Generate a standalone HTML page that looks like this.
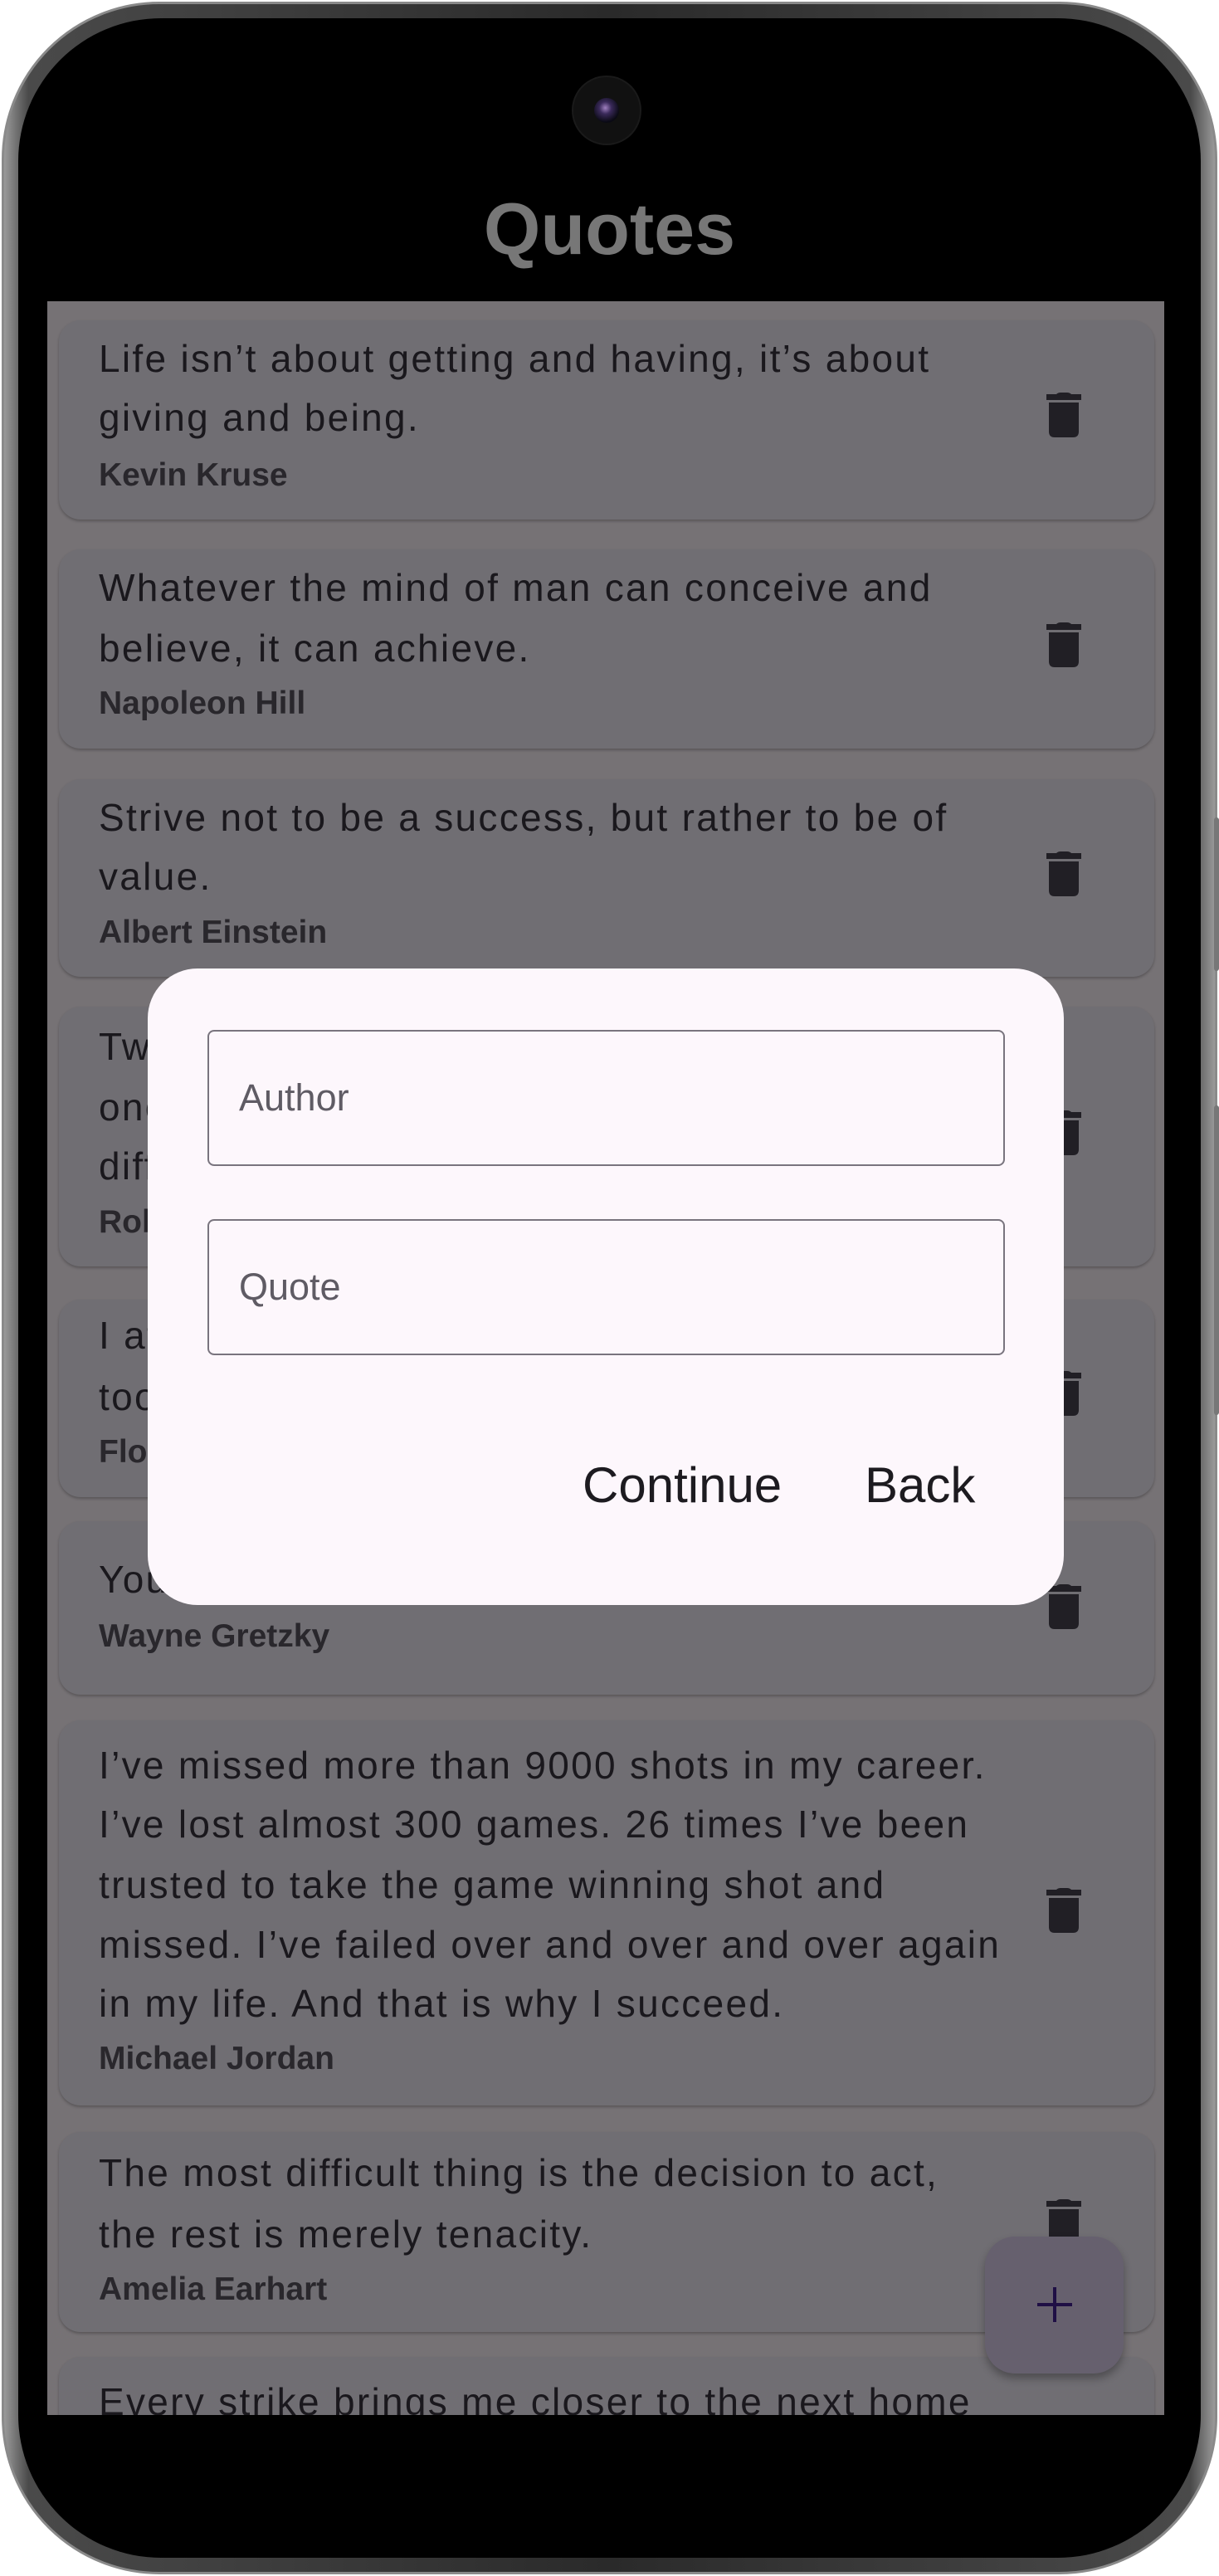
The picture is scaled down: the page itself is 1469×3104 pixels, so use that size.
<!DOCTYPE html>
<html><head><meta charset="utf-8"><style>
*{margin:0;padding:0;box-sizing:border-box}
body{width:1469px;height:3104px;background:#fff;position:relative;overflow:hidden;font-family:"Liberation Sans",Arial,sans-serif}
.frame{position:absolute;left:2px;top:2px;width:1465px;height:3100px;border-radius:190px;background:linear-gradient(90deg,#9a9a9a,#4a4a4a 2%,#2a2a2a 50%,#4a4a4a 98%,#9a9a9a);border:3px solid #8a8a8a}
.bezel{position:absolute;left:22px;top:22px;width:1425px;height:3060px;border-radius:172px;background:#000}
.btn{position:absolute;right:0;width:6px;background:#777;border-radius:3px}
.clip{position:absolute;left:0;top:0;width:1469px;height:3104px;clip-path:inset(363px 66px 194px 57px);background:#767275}
.card{position:absolute;left:71px;width:1320px;background:#706e73;border-radius:26px;box-shadow:0 2px 3px rgba(0,0,0,.25)}
.l{position:absolute;left:119px;height:72px;line-height:72px;font-size:46px;letter-spacing:2.3px;color:#1a181d;white-space:nowrap}
.a{position:absolute;left:119px;height:50px;line-height:50px;font-size:39px;font-weight:bold;color:#29272c;white-space:nowrap}
.t{position:absolute;left:1261px;width:42px;height:54px}
.dlg{position:absolute;left:178px;top:1167px;width:1104px;height:767px;background:#fdf7fc;border-radius:60px}
.fld{position:absolute;left:72px;width:961px;height:164px;border:2px solid #79747e;border-radius:8px}
.fld span{position:absolute;left:36px;top:0;line-height:160px;font-size:45px;color:#5f5b64}
.b{position:absolute;top:588px;font-size:60px;color:#1d1b20;line-height:70px}
</style></head><body>
<div class="frame"></div>
<div class="btn" style="top:985px;height:185px"></div>
<div class="btn" style="top:1332px;height:373px"></div>
<div class="bezel"></div>
<div style="position:absolute;left:691px;top:93px;width:80px;height:80px;border-radius:50%;background:#111;box-shadow:0 0 0 2px #1a1a1a"></div>
<div style="position:absolute;left:716px;top:118px;width:30px;height:30px;border-radius:50%;background:radial-gradient(circle at 45% 40%,#a080c0 0,#3a2a5a 30%,#0a0a14 70%)"></div>
<div style="position:absolute;left:0;top:226px;width:1469px;text-align:center;font-size:88px;font-weight:bold;color:#777;line-height:100px">Quotes</div>
<svg width="0" height="0" style="position:absolute"><defs><symbol id="tr" viewBox="0 0 42 54"><path d="M12 2 Q14 0 17 0 H25 Q28 0 30 2 H42 V9 H0 V2 Z" fill="#211f25"/><path d="M3 12 H39 V47 Q39 54 32 54 H10 Q3 54 3 47 Z" fill="#211f25"/></symbol></defs></svg>
<div class="clip">
<div class="card" style="top:386px;height:240px"></div>
<div class="l" style="top:396px">Life isn’t about getting and having, it’s about</div>
<div class="l" style="top:467px">giving and being.</div>
<div class="a" style="top:548px">Kevin Kruse</div>
<svg class="t" style="top:473px"><use href="#tr"/></svg>

<div class="card" style="top:662px;height:240px"></div>
<div class="l" style="top:672px">Whatever the mind of man can conceive and</div>
<div class="l" style="top:745px">believe, it can achieve.</div>
<div class="a" style="top:823px">Napoleon Hill</div>
<svg class="t" style="top:750px"><use href="#tr"/></svg>

<div class="card" style="top:939px;height:238px"></div>
<div class="l" style="top:949px">Strive not to be a success, but rather to be of</div>
<div class="l" style="top:1020px">value.</div>
<div class="a" style="top:1099px">Albert Einstein</div>
<svg class="t" style="top:1026px"><use href="#tr"/></svg>

<div class="card" style="top:1213px;height:313px"></div>
<div class="l" style="top:1225px">Two roads diverged in a wood, and I—I took the</div>
<div class="l" style="top:1298px">one less traveled by, and that has made all the</div>
<div class="l" style="top:1369px">difference.</div>
<div class="a" style="top:1448px">Robert Frost</div>
<svg class="t" style="top:1338px"><use href="#tr"/></svg>

<div class="card" style="top:1566px;height:238px"></div>
<div class="l" style="top:1573px">I attribute my success to this: I never gave or</div>
<div class="l" style="top:1647px">took any excuse.</div>
<div class="a" style="top:1725px">Florence Nightingale</div>
<svg class="t" style="top:1652px"><use href="#tr"/></svg>

<div class="card" style="top:1833px;height:209px"></div>
<div class="l" style="top:1867px">You miss 100% of the shots you don’t take.</div>
<div class="a" style="top:1947px">Wayne Gretzky</div>
<svg class="t" style="top:1909px"><use href="#tr"/></svg>

<div class="card" style="top:2073px;height:464px"></div>
<div class="l" style="top:2091px">I’ve missed more than 9000 shots in my career.</div>
<div class="l" style="top:2162px">I’ve lost almost 300 games. 26 times I’ve been</div>
<div class="l" style="top:2235px">trusted to take the game winning shot and</div>
<div class="l" style="top:2307px">missed. I’ve failed over and over and over again</div>
<div class="l" style="top:2378px">in my life. And that is why I succeed.</div>
<div class="a" style="top:2456px">Michael Jordan</div>
<svg class="t" style="top:2275px"><use href="#tr"/></svg>

<div class="card" style="top:2569px;height:241px"></div>
<div class="l" style="top:2582px">The most difficult thing is the decision to act,</div>
<div class="l" style="top:2656px">the rest is merely tenacity.</div>
<div class="a" style="top:2734px">Amelia Earhart</div>
<svg class="t" style="top:2650px"><use href="#tr"/></svg>

<div class="card" style="top:2840px;height:200px"></div>
<div class="l" style="top:2858px">Every strike brings me closer to the next home</div>

<div style="position:absolute;left:1187px;top:2695px;width:167px;height:165px;border-radius:36px;background:#66606e;box-shadow:0 6px 10px rgba(0,0,0,.3)"></div>
<div style="position:absolute;left:1250px;top:2775px;width:42px;height:4px;background:#1f0f45"></div>
<div style="position:absolute;left:1269px;top:2756px;width:4px;height:42px;background:#1f0f45"></div>
</div>

<div class="dlg">
<div class="fld" style="top:74px"><span>Author</span></div>
<div class="fld" style="top:302px"><span>Quote</span></div>
<div class="b" style="left:524px">Continue</div>
<div class="b" style="left:864px">Back</div>
</div>
</body></html>
